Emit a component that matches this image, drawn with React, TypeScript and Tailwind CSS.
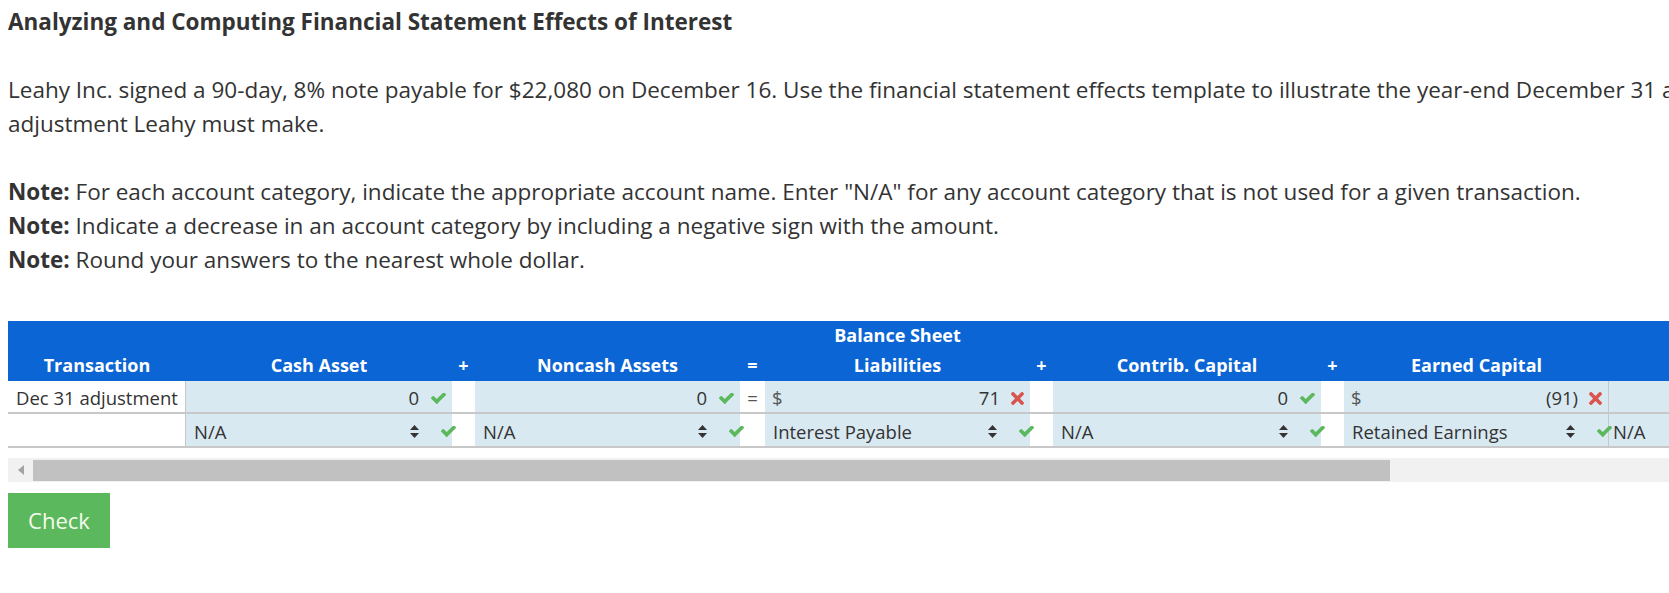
import React from 'react';

const cols = 'grid grid-cols-[178px_266px_23px_265px_25px_265px_23px_268px_23px_265px_120px]';

function CheckIcon({ className = '' }: { className?: string }) {
  return (
    <svg viewBox="121 400 1550 1125" className={`w-[15px] h-[11px] shrink-0 fill-[#5cb85c] ${className}`}>
      <path d="M1671 566q0 40-28 68l-724 724-136 136q-28 28-68 28t-68-28l-136-136-362-362q-28-28-28-68t28-68l136-136q28-28 68-28t68 28l294 295 656-657q28-28 68-28t68 28l136 136q28 28 28 68z" />
    </svg>
  );
}

function XIcon() {
  return (
    <svg viewBox="0 0 352 512" className="w-[13px] h-[19px] shrink-0 fill-[#d9534f] ml-[11px] mr-[6px]">
      <path d="M242.72 256l100.07-100.07c12.280-12.280 12.280-32.190 0-44.480l-22.240-22.240c-12.280-12.280-32.190-12.280-44.480 0L176 189.280 75.930 89.210c-12.280-12.280-32.190-12.280-44.480 0L9.210 111.450c-12.280 12.280-12.280 32.190 0 44.480L109.280 256 9.210 356.070c-12.280 12.280-12.280 32.190 0 44.480l22.240 22.240c12.280 12.280 32.200 12.280 44.480 0L176 322.720l100.070 100.070c12.280 12.280 32.200 12.280 44.480 0l22.240-22.240c12.280-12.280 12.280-32.190 0-44.480L242.720 256z" />
    </svg>
  );
}

function SortIcon() {
  return (
    <svg viewBox="0 0 9 15" className="w-[9px] h-[15px] shrink-0 fill-[#333] ml-auto">
      <polygon points="0,6 4.5,1 9,6" />
      <polygon points="0,9 4.5,14 9,9" />
    </svg>
  );
}

function AmountCell({ value }: { value: string }) {
  return (
    <div className="bg-[#d9e9f1] flex items-center justify-end pt-[3px] pr-[6px]">
      <span>{value}</span>
      <CheckIcon className="ml-[12px]" />
    </div>
  );
}

function DollarCell({ value, border }: { value: string; border?: boolean }) {
  return (
    <div className={`bg-[#d9e9f1] flex items-center pt-[3px] pl-[7px] ${border ? 'border-r border-[#c8c8c8]' : ''}`}>
      <span className="text-[#555]">$</span>
      <span className="ml-auto">{value}</span>
      <XIcon />
    </div>
  );
}

function SelectCell({ label, border }: { label: string; border?: boolean }) {
  return (
    <div className={`bg-[#d9e9f1] flex items-center pt-[3px] pl-[8px] ${border ? 'border-r border-[#c8c8c8]' : ''}`}>
      <span>{label}</span>
      <SortIcon />
      <CheckIcon className="relative z-10 ml-[22px] mr-[-4px]" />
    </div>
  );
}

export default function App() {
  return (
    <div className="w-[1669px] h-[593px] overflow-hidden bg-white">
      <div className="w-[1780px] pl-2 pt-2 font-['Open_Sans',sans-serif] text-[#333]">
        <h1 className="text-[22.5px] font-bold leading-[28px]">
          Analyzing and Computing Financial Statement Effects of Interest
        </h1>

        <p className="mt-[37px] text-[22.5px] leading-[34px]">
          Leahy Inc. signed a 90-day, 8% note payable for $22,080 on December 16. Use the financial statement effects template to illustrate the year-end December 31 accrual adjustment Leahy must make.
        </p>

        <div className="mt-[34px] text-[22.5px] leading-[34px]">
          <p><span className="font-bold">Note:</span> For each account category, indicate the appropriate account name. Enter "N/A" for any account category that is not used for a given transaction.</p>
          <p><span className="font-bold">Note:</span> Indicate a decrease in an account category by including a negative sign with the amount.</p>
          <p><span className="font-bold">Note:</span> Round your answers to the nearest whole dollar.</p>
        </div>

        <div className="mt-[44px] text-[18.5px]">
          <div className="bg-[#0b65d4] text-white font-bold text-[18px]">
            <div className={`${cols} h-[29px] items-center`}>
              <div className="col-start-2 col-end-11 text-center">Balance Sheet</div>
            </div>
            <div className={`${cols} h-[31px] items-center text-center`}>
              <div>Transaction</div>
              <div>Cash Asset</div>
              <div>+</div>
              <div>Noncash Assets</div>
              <div>=</div>
              <div>Liabilities</div>
              <div>+</div>
              <div>Contrib. Capital</div>
              <div>+</div>
              <div>Earned Capital</div>
              <div></div>
            </div>
          </div>

          <div className={`${cols} h-[33px] border-b-2 border-[#c8c8c8]`}>
            <div className="bg-white border-r border-[#c8c8c8] flex items-center pt-[3px] pl-2">Dec 31 adjustment</div>
            <AmountCell value="0" />
            <div className="bg-white" />
            <AmountCell value="0" />
            <div className="bg-white flex items-center justify-center pt-[3px] text-[#555]">=</div>
            <DollarCell value="71" />
            <div className="bg-white" />
            <AmountCell value="0" />
            <div className="bg-white" />
            <DollarCell value="(91)" border />
            <div className="bg-[#d9e9f1]" />
          </div>

          <div className={`${cols} h-[34px] border-b-2 border-[#c8c8c8]`}>
            <div className="bg-white border-r border-[#c8c8c8]" />
            <SelectCell label="N/A" />
            <div className="bg-white" />
            <SelectCell label="N/A" />
            <div className="bg-white" />
            <SelectCell label="Interest Payable" />
            <div className="bg-white" />
            <SelectCell label="N/A" />
            <div className="bg-white" />
            <SelectCell label="Retained Earnings" border />
            <div className="bg-[#d9e9f1] flex items-center pt-[3px] pl-[4px]">N/A</div>
          </div>
        </div>

        <div className="mt-[10px] h-[24px] bg-[#f1f1f1] flex items-center">
          <div className="w-[25px] flex items-center justify-center">
            <svg viewBox="0 0 6 10" className="w-[6px] h-[10px] fill-[#a3a3a3]">
              <polygon points="6,0 0,5 6,10" />
            </svg>
          </div>
          <div className="w-[1357px] h-[21px] bg-[#c1c1c1]" />
        </div>

        <button className="mt-[11px] w-[102px] h-[55px] bg-[#5cb85c] text-[#f6fbef] text-[22px] flex items-center justify-center">
          Check
        </button>
      </div>
    </div>
  );
}
